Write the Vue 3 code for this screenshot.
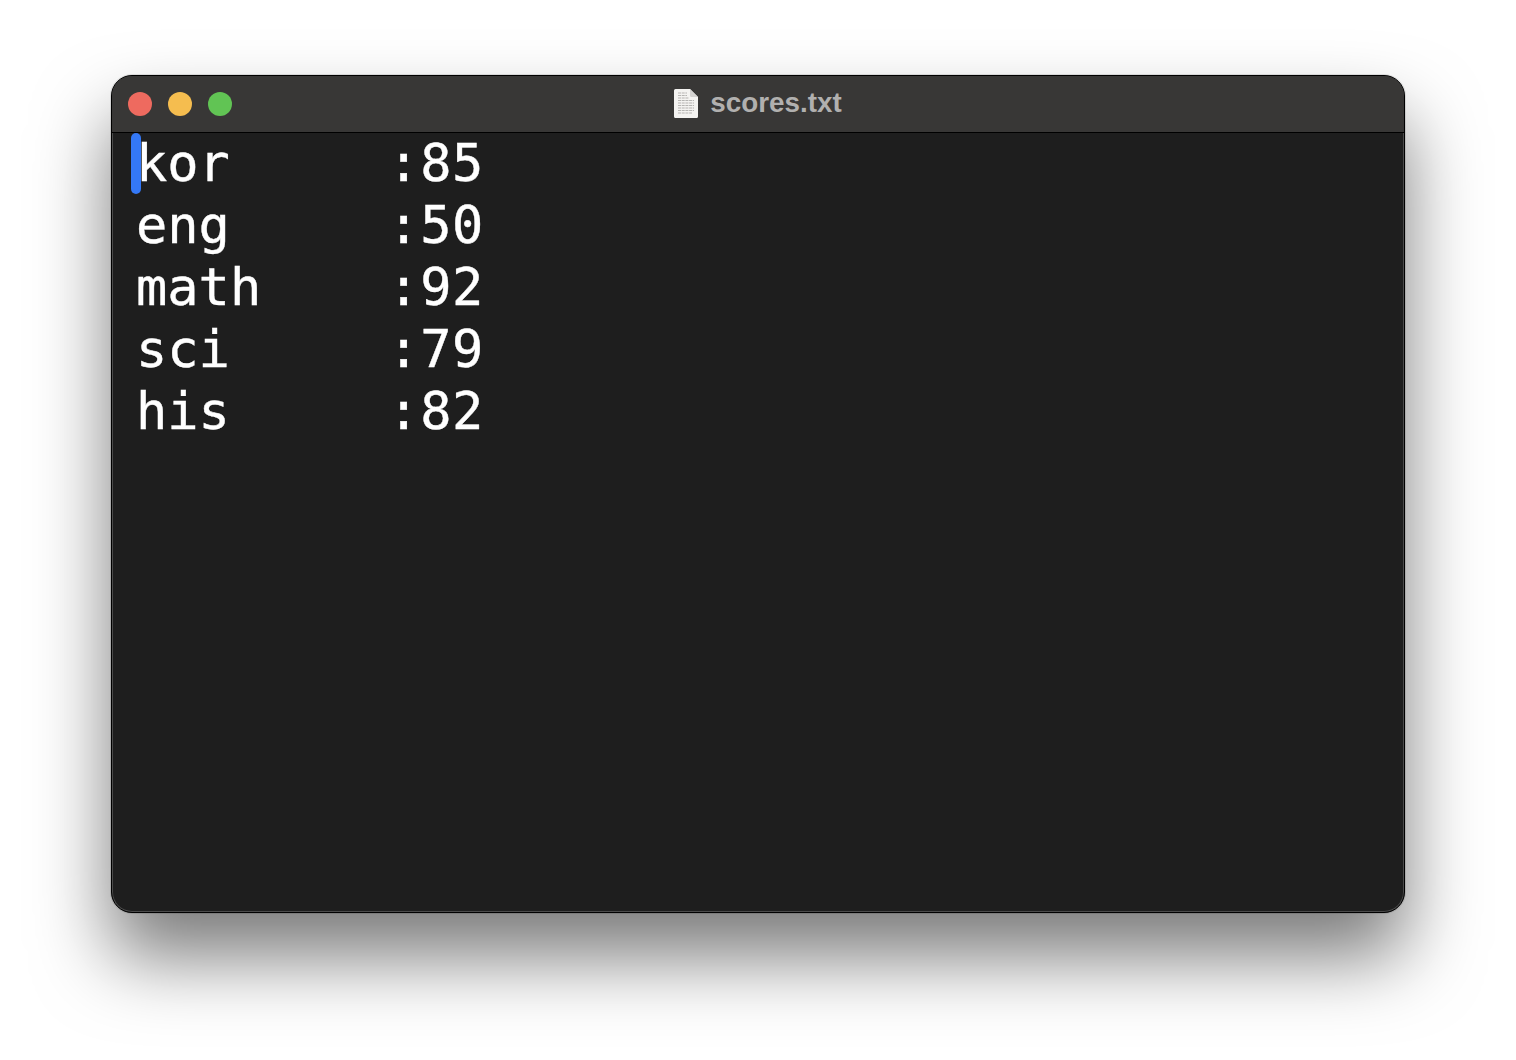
<template>
    <div class="page">
        <div class="window">
            <div class="titlebar">
                <div class="lights">
                    <span class="light red"></span>
                    <span class="light yellow"></span>
                    <span class="light green"></span>
                </div>
                <div class="title">
                    <svg class="file-icon" width="24" height="29" viewBox="0 0 24 29">
                        <path d="M1.5 0H16L24 8V27.5A1.5 1.5 0 0 1 22.5 29H1.5A1.5 1.5 0 0 1 0 27.5V1.5A1.5 1.5 0 0 1 1.5 0Z" fill="#f4f3f1" />
                        <path d="M16 0L24 8H17.5A1.5 1.5 0 0 1 16 6.500Z" fill="#d4d3d1" />
                        <path d="M4 4H13M4 6.500H13M4 9H15M4 11.500H20M4 14H20M4 16.500H20M4 19H20M4 21.500H20M4 24H18" stroke="#b5b4b2" stroke-width="1.200" stroke-dasharray="3 0.700" fill="none" />
                    </svg>
                    <span class="name">scores.txt</span>
                </div>
            </div>
            <div class="editor">
                <span class="cursor"></span>
                <div class="lines">
                    <div v-for="row in rows" :key="row.name" class="line">
                        <span class="key">{{ row.name }}</span><span class="colon">:</span><span class="score">{{ row.score }}</span>
                    </div>
                </div>
            </div>
        </div>
    </div>
</template>

<script setup>
const rows = [
    { name: 'kor', score: 85 },
    { name: 'eng', score: 50 },
    { name: 'math', score: 92 },
    { name: 'sci', score: 79 },
    { name: 'his', score: 82 },
];
</script>

<style>
html, body {
    background: #fff;
    overflow: hidden;
}
</style>

<style scoped>
.page {
    height: 1060px;
    box-sizing: border-box;
    padding: 75px 111px 147px 111px;
}
.window {
    height: 100%;
    box-sizing: border-box;
    border: 1px solid #000;
    border-radius: 21px;
    overflow: hidden;
    background: #1e1e1e;
    box-shadow: 0 0 0 1px rgba(0, 0, 0, 0.1), inset 0 0 0 1px rgba(255, 255, 255, 0.2), 0 44px 76px rgba(0, 0, 0, 0.52);
    display: flex;
    flex-direction: column;
}
.titlebar {
    position: relative;
    height: 57px;
    flex-shrink: 0;
    background: #383736;
    border-bottom: 1px solid #000;
    box-sizing: border-box;
    display: flex;
    align-items: center;
    justify-content: center;
}
.lights {
    position: absolute;
    left: 16px;
    top: 16px;
    display: flex;
    gap: 16px;
}
.light {
    width: 24px;
    height: 24px;
    border-radius: 50%;
}
.red { background: #ee6a5f; }
.yellow { background: #f5bd4f; }
.green { background: #61c454; }
.title {
    display: flex;
    align-items: center;
    gap: 12px;
    margin-top: -2px;
}
.name {
    font-family: "Liberation Sans", Arial, sans-serif;
    font-weight: 700;
    font-size: 27.800px;
    color: #b1b0af;
    line-height: 30px;
}
.editor {
    position: relative;
    flex: 1;
    padding: 0 0 0 24px;
    font-family: "DejaVu Sans Mono", monospace;
    font-size: 52px;
    line-height: 62px;
    color: #fff;
    -webkit-text-stroke: 0.4px #fff;
}
.lines {
    margin-top: -1px;
}
.line {
    display: flex;
}
.key {
    width: 252px;
}
.colon {
    margin-right: 1px;
}
.score {
    letter-spacing: 0.5px;
}
.cursor {
    position: absolute;
    left: 19px;
    top: 0;
    width: 10px;
    height: 61px;
    border-radius: 5px;
    background: #3478f6;
}
</style>
